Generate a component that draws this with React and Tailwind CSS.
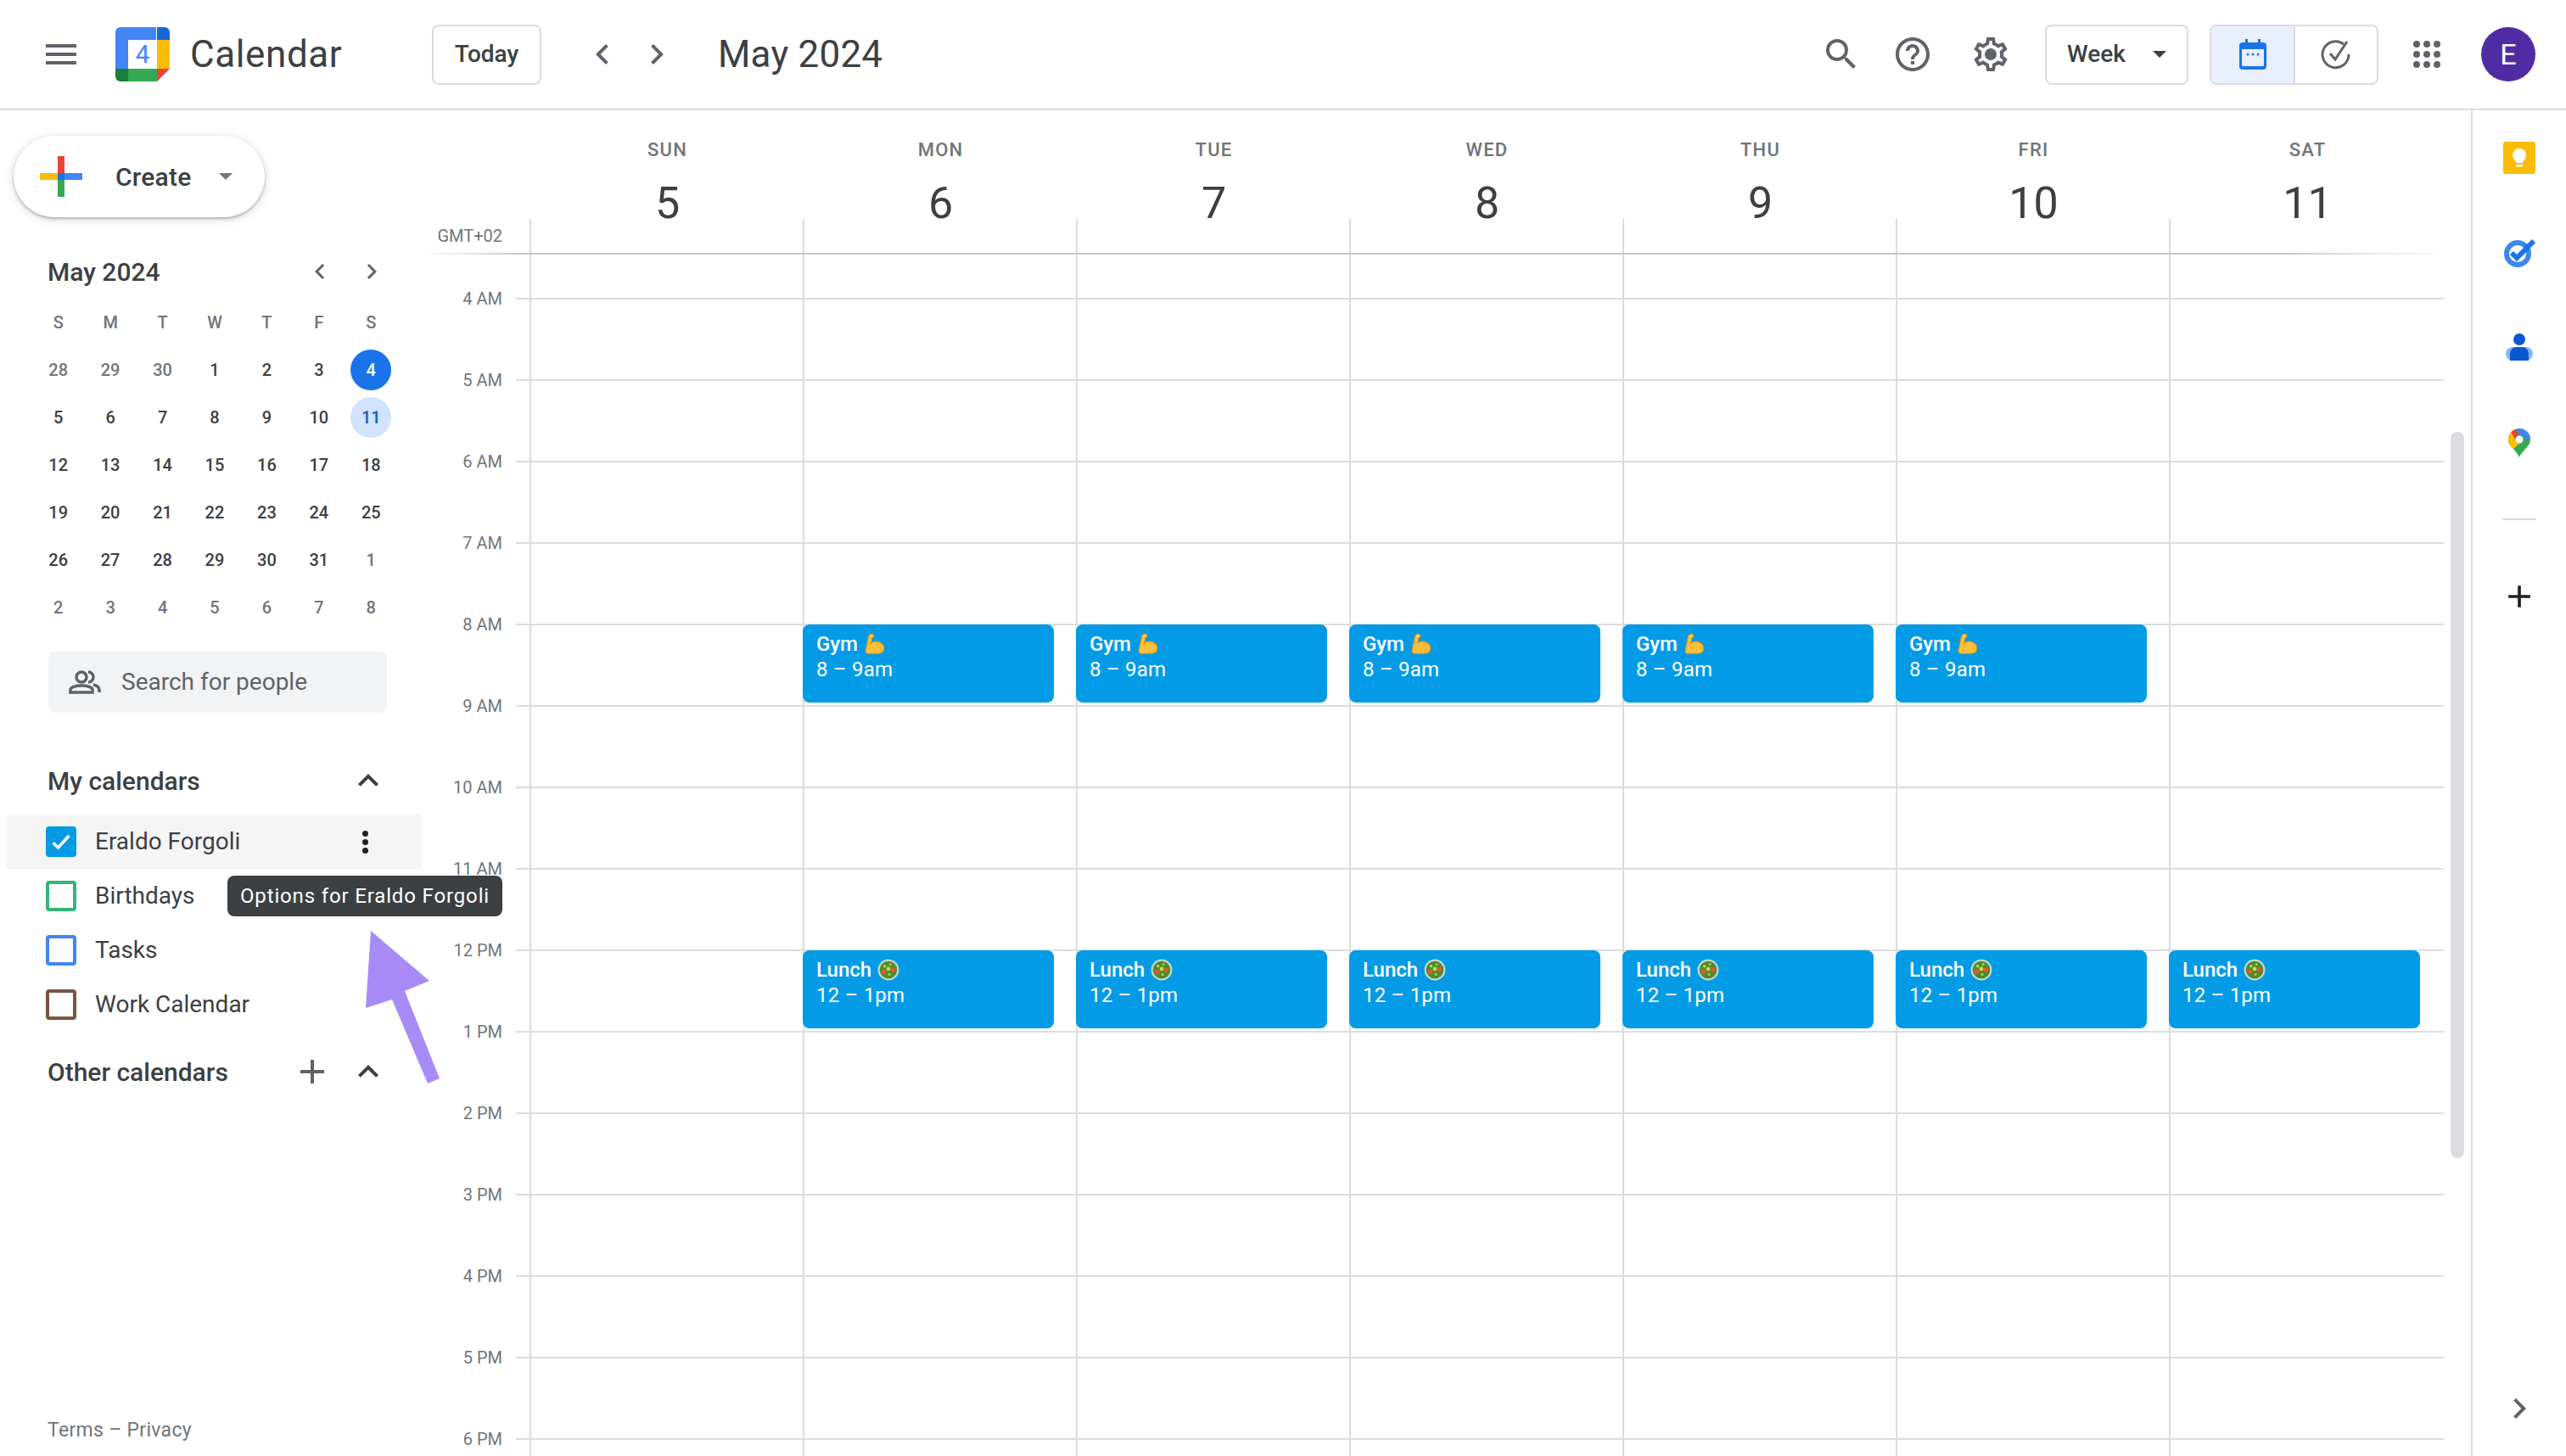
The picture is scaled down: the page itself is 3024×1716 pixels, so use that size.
import React from 'react';

const days = [
  { name: 'SUN', num: 5 },
  { name: 'MON', num: 6 },
  { name: 'TUE', num: 7 },
  { name: 'WED', num: 8 },
  { name: 'THU', num: 9 },
  { name: 'FRI', num: 10 },
  { name: 'SAT', num: 11 },
];

const hours = ['4 AM', '5 AM', '6 AM', '7 AM', '8 AM', '9 AM', '10 AM', '11 AM', '12 PM', '1 PM', '2 PM', '3 PM', '4 PM', '5 PM', '6 PM'];

const miniDays = [
  [28, 29, 30, 1, 2, 3, 4],
  [5, 6, 7, 8, 9, 10, 11],
  [12, 13, 14, 15, 16, 17, 18],
  [19, 20, 21, 22, 23, 24, 25],
  [26, 27, 28, 29, 30, 31, 1],
  [2, 3, 4, 5, 6, 7, 8],
];

const calendars = [
  { name: 'Eraldo Forgoli', color: 'border-[#039be5] bg-[#039be5]', checked: true },
  { name: 'Birthdays', color: 'border-[#33b679]' },
  { name: 'Tasks', color: 'border-[#4285f4]' },
  { name: 'Work Calendar', color: 'border-[#795548]' },
];

function Icon({ d, size = 48, className = 'fill-[#5f6368]' }) {
  return (
    <svg width={size} height={size} viewBox="0 0 24 24" className={`shrink-0 ${className}`}>
      <path d={d} />
    </svg>
  );
}

const paths = {
  menu: 'M3 18h18v-2H3v2zm0-5h18v-2H3v2zm0-7v2h18V6H3z',
  left: 'M15.41 7.41L14 6l-6 6 6 6 1.41-1.41L10.83 12z',
  right: 'M10 6L8.59 7.41 13.17 12l-4.58 4.59L10 18l6-6z',
  search: 'M15.5 14h-.79l-.28-.27A6.471 6.471 0 0 0 16 9.5 6.5 6.5 0 1 0 9.5 16c1.61 0 3.09-.59 4.23-1.57l.27.28v.79l5 4.99L20.49 19l-4.99-5zm-6 0C7.01 14 5 11.99 5 9.5S7.01 5 9.5 5 14 7.01 14 9.5 11.99 14 9.5 14z',
  help: 'M11 18h2v-2h-2v2zm1-16C6.48 2 2 6.48 2 12s4.48 10 10 10 10-4.48 10-10S17.52 2 12 2zm0 18c-4.41 0-8-3.59-8-8s3.59-8 8-8 8 3.59 8 8-3.59 8-8 8zm0-14c-2.21 0-4 1.79-4 4h2c0-1.1.9-2 2-2s2 .9 2 2c0 2-3 1.75-3 5h2c0-2.25 3-2.5 3-5 0-2.21-1.79-4-4-4z',
  settings: 'M19.43 12.98c.04-.32.07-.64.07-.98 0-.34-.03-.66-.07-.98l2.11-1.65c.19-.15.24-.42.12-.64l-2-3.46c-.09-.16-.26-.25-.44-.25-.06 0-.12.01-.17.03l-2.49 1c-.52-.4-1.08-.73-1.69-.98l-.38-2.65C14.46 2.18 14.25 2 14 2h-4c-.25 0-.46.18-.49.42l-.38 2.65c-.61.25-1.17.59-1.69.98l-2.49-1c-.06-.02-.12-.03-.18-.03-.17 0-.34.09-.43.25l-2 3.46c-.13.22-.07.49.12.64l2.11 1.65c-.04.32-.07.65-.07.98 0 .33.03.66.07.98l-2.11 1.65c-.19.15-.24.42-.12.64l2 3.46c.09.16.26.25.44.25.06 0 .12-.01.17-.03l2.49-1c.52.4 1.08.73 1.69.98l.38 2.65c.03.24.24.42.49.42h4c.25 0 .46-.18.49-.42l.38-2.65c.61-.25 1.17-.59 1.69-.98l2.49 1c.06.02.12.03.18.03.17 0 .34-.09.43-.25l2-3.46c.12-.22.07-.49-.12-.64l-2.11-1.65zm-1.98-1.71c.04.31.05.52.05.73 0 .21-.02.43-.05.73l-.14 1.13.89.7 1.08.84-.7 1.21-1.27-.51-1.04-.42-.9.68c-.43.32-.84.56-1.25.73l-1.06.43-.16 1.13-.2 1.35h-1.4l-.19-1.35-.16-1.13-1.06-.43c-.43-.18-.83-.41-1.23-.71l-.91-.7-1.06.43-1.27.51-.7-1.21 1.08-.84.89-.7-.14-1.13c-.03-.31-.05-.54-.05-.74s.02-.43.05-.73l.14-1.13-.89-.7-1.08-.84.7-1.21 1.27.51 1.04.42.9-.68c.43-.32.84-.56 1.25-.73l1.06-.43.16-1.13.2-1.35h1.39l.19 1.35.16 1.13 1.06.43c.43.18.83.41 1.23.71l.91.7 1.06-.43 1.27-.51.7 1.21-1.07.85-.89.7.14 1.13zM12 8.500a3.500 3.500 0 1 0 0 7 3.500 3.500 0 0 0 0-7z',
  up: 'M12 8l-6 6 1.41 1.41L12 10.83l4.59 4.58L18 14z',
  plus: 'M19 13h-6v6h-2v-6H5v-2h6V5h2v6h6v2z',
};

function CalendarLogo() {
  return (
    <svg width="64" height="64" viewBox="0 0 64 64" className="shrink-0">
      <path d="M6 0h42v15H15v34H0V6a6 6 0 0 1 6-6z" fill="#4285f4" />
      <path d="M49 0h9a6 6 0 0 1 6 6v9H49z" fill="#1967d2" />
      <rect x="49" y="15" width="15" height="34" fill="#fbbc04" />
      <rect x="15" y="49" width="34" height="15" fill="#34a853" />
      <path d="M0 49h15v15H6a6 6 0 0 1-6-6z" fill="#188038" />
      <path d="M49 49h15L49 64z" fill="#ea4335" />
      <rect x="15" y="15" width="34" height="34" fill="#fff" />
      <text x="32" y="42" textAnchor="middle" fontSize="30" fontFamily="Roboto, sans-serif" fill="#4285f4">4</text>
    </svg>
  );
}

function PlusLogo() {
  return (
    <svg width="50" height="48" viewBox="0 0 50 48" className="shrink-0">
      <rect x="0" y="20" width="22" height="8" fill="#fbbc04" />
      <rect x="21" y="0" width="8" height="21" fill="#ea4335" />
      <rect x="29" y="20" width="21" height="8" fill="#4285f4" />
      <rect x="21" y="20" width="8" height="8" fill="#1a73e8" />
      <rect x="21" y="28" width="8" height="20" fill="#34a853" />
    </svg>
  );
}

function Muscle() {
  return (
    <svg width="26" height="26" viewBox="0 0 24 24" className="shrink-0">
      <path d="M7 1.500c1.500-.8 3.500-.5 4 1 .4 1.200-.7 2.500-2 3L8 11c2-2 6-2.500 9-1 3 1.300 5 4 5 7 0 3.500-3 5.500-8 5.500H5c-2.500 0-3.500-1.500-3-4L5 4c.2-1.200 1-2 2-2.500z" fill="#fbbf3c" stroke="#d9921a" strokeWidth="1" />
      <circle cx="8" cy="3.500" r="1.200" fill="#fde08a" />
    </svg>
  );
}

function Salad() {
  return (
    <svg width="26" height="26" viewBox="0 0 24 24" className="shrink-0">
      <circle cx="12" cy="12" r="11.500" fill="#c9d6c2" />
      <circle cx="12" cy="12" r="9.500" fill="#4f8a2f" />
      <circle cx="7" cy="14" r="2.500" fill="#e8563a" />
      <circle cx="17" cy="12" r="2.500" fill="#e8563a" />
      <circle cx="12" cy="11" r="2.200" fill="#c6de4e" />
      <circle cx="8" cy="8" r="1.500" fill="#c6de4e" />
      <circle cx="14" cy="6" r="1.500" fill="#9ccc3c" />
      <circle cx="13" cy="17" r="1.500" fill="#9ccc3c" />
    </svg>
  );
}

function EventCard({ title, time, emoji, className }) {
  return (
    <div className={`absolute -left-[2px] z-[1] w-[296px] h-[92px] rounded-[8px] bg-[#039be5] pl-[16px] pt-[8px] text-white text-[24px] leading-[30px] ${className}`}>
      <div className="flex items-center gap-[7px] font-medium">
        <span>{title}</span>
        {emoji}
      </div>
      <div className="tracking-[0.2px]">{time}</div>
    </div>
  );
}

function Header() {
  return (
    <header className="flex items-center h-[130px] shrink-0 border-b-2 border-[#dadce0]">
      <div className="ml-[48px]"><Icon d={paths.menu} /></div>
      <div className="ml-[40px]"><CalendarLogo /></div>
      <div className="ml-[24px] w-[180px] text-[44px] tracking-[0.6px] leading-none text-[#3c4043] whitespace-nowrap">Calendar</div>
      <div className="ml-[105px] w-[129px] h-[71px] flex items-center justify-center rounded-[8px] border-2 border-[#dadce0] text-[28px] font-medium text-[#3c4043]">Today</div>
      <div className="ml-[48px] flex gap-[16px]">
        <Icon d={paths.left} />
        <Icon d={paths.right} />
      </div>
      <div className="ml-[48px] text-[44px] tracking-[0.2px] leading-none text-[#3c4043]">May 2024</div>

      <div className="ml-auto flex items-center pr-[36px]">
        <Icon d={paths.search} />
        <div className="ml-[36px]"><Icon d={paths.help} /></div>
        <div className="ml-[44px]"><Icon d={paths.settings} /></div>
        <div className="ml-[40px] w-[169px] h-[71px] flex items-center justify-between pl-[24px] pr-[24px] rounded-[8px] border-2 border-[#dadce0] text-[28px] font-medium text-[#3c4043]">
          <span>Week</span>
          <span className="w-0 h-0 border-x-[8px] border-x-transparent border-t-[8px] border-t-[#3c4043]" />
        </div>
        <div className="ml-[25px] w-[199px] h-[71px] flex rounded-[8px] border-2 border-[#dadce0] overflow-hidden">
          <div className="w-[99px] flex items-center justify-center bg-[#e8f0fe] border-r-2 border-[#dadce0]">
            <svg width="32" height="36" viewBox="0 0 32 36">
              <path d="M7 0h3v4h12V0h3v4h3a4 4 0 0 1 4 4v24a4 4 0 0 1-4 4H4a4 4 0 0 1-4-4V8a4 4 0 0 1 4-4h3z" fill="#1a73e8" />
              <rect x="3" y="12" width="26" height="20" rx="1" fill="#e8f0fe" />
              <circle cx="10" cy="18" r="1.500" fill="#1a73e8" />
              <circle cx="16" cy="18" r="1.500" fill="#1a73e8" />
              <circle cx="22" cy="18" r="1.500" fill="#1a73e8" />
            </svg>
          </div>
          <div className="flex-1 flex items-center justify-center">
            <svg width="36" height="36" viewBox="0 0 36 36" fill="none" stroke="#5f6368" strokeWidth="3">
              <path d="M27 6a15.500 15.500 0 1 0 6 12" />
              <path d="M11 17l6 7L31 3" />
            </svg>
          </div>
        </div>
        <div className="ml-[41px] w-[32px] h-[32px] grid grid-cols-3 gap-[4px]">
          {Array.from({ length: 9 }).map((_, i) => (
            <span key={i} className="w-[8px] h-[8px] rounded-full bg-[#5f6368]" />
          ))}
        </div>
        <div className="ml-[48px] w-[64px] h-[64px] rounded-full bg-[#4f2ca3] flex items-center justify-center text-white text-[34px]">E</div>
      </div>
    </header>
  );
}

function MiniCalendar() {
  return (
    <div>
      <div className="mt-[44px] h-[40px] flex items-center pl-[56px] text-[30px] font-medium text-[#3c4043]">
        <span className="w-[303px]">May 2024</span>
        <Icon d={paths.left} size={36} />
        <span className="ml-[25px]"><Icon d={paths.right} size={36} /></span>
      </div>
      <div className="mt-[12px] ml-[38px] w-[430px] grid grid-cols-7 auto-rows-[56px] text-[20px] font-medium">
        {['S', 'M', 'T', 'W', 'T', 'F', 'S'].map((d, i) => (
          <div key={i} className="flex items-center justify-center text-[#70757a]">{d}</div>
        ))}
        {miniDays.map((week, r) =>
          week.map((n, c) => {
            const outside = (r === 0 && n > 20) || (r >= 4 && n < 10);
            const today = r === 0 && c === 6;
            const selected = r === 1 && c === 6;
            let cls = 'text-[#3c4043]';
            if (outside) cls = 'text-[#70757a]';
            if (today) cls = 'bg-[#1a73e8] text-white';
            if (selected) cls = 'bg-[#d2e3fc] text-[#185abc]';
            return (
              <div key={`${r}-${c}`} className="flex items-center justify-center">
                <span className={`w-[48px] h-[48px] rounded-full flex items-center justify-center ${cls}`}>{n}</span>
              </div>
            );
          })
        )}
      </div>
    </div>
  );
}

function Sidebar() {
  return (
    <aside className="relative z-10 w-[497px] shrink-0 flex flex-col">
      <div className="mt-[30px] ml-[16px] w-[296px] h-[96px] shrink-0 rounded-[48px] bg-white flex items-center pl-[31px] shadow-[0_2px_3px_rgba(60,64,67,0.3),0_2px_8px_2px_rgba(60,64,67,0.15)]">
        <PlusLogo />
        <span className="ml-[39px] text-[30px] tracking-[0.2px] font-medium text-[#3c4043]">Create</span>
        <span className="ml-[33px] w-0 h-0 border-x-[8px] border-x-transparent border-t-[8px] border-t-[#70757a]" />
      </div>

      <MiniCalendar />

      <div className="mt-[24px] ml-[57px] w-[399px] h-[72px] shrink-0 rounded-[8px] bg-[#f1f3f4] flex items-center pl-[24px] text-[28px] text-[#5f6368]">
        <svg width="38" height="28" viewBox="0 0 38 28" fill="none" stroke="#5f6368" strokeWidth="3.500">
          <circle cx="15" cy="8" r="6" />
          <path d="M2 26v-3c0-3 6-5 13-5s13 2 13 5v3z" />
          <path d="M23 2a6 6 0 0 1 0 12" />
          <path d="M29 17c4 1 7 3 7 6v3" />
        </svg>
        <span className="ml-[24px]">Search for people</span>
      </div>

      <div className="mt-[52px] h-[56px] shrink-0 flex items-center pl-[56px] text-[30px] font-medium text-[#3c4043]">
        <span className="w-[354px]">My calendars</span>
        <Icon d={paths.up} className="fill-[#3c4043]" />
      </div>

      <div className="mt-[12px]">
        {calendars.map((cal, i) => (
          <div key={cal.name} className={`ml-[8px] h-[64px] flex items-center pl-[46px] ${i === 0 ? 'bg-[#f5f5f5]' : ''}`}>
            <span className={`w-[36px] h-[36px] rounded-[4px] border-[4px] flex items-center justify-center ${cal.color}`}>
              {cal.checked && (
                <svg width="28" height="28" viewBox="0 0 24 24" fill="none" stroke="#fff" strokeWidth="3">
                  <path d="M4 13l5 5L20 6" />
                </svg>
              )}
            </span>
            <span className="ml-[22px] w-[315px] text-[28px] text-[#3c4043]">{cal.name}</span>
            {cal.checked && (
              <span className="flex flex-col gap-[3px]">
                <span className="w-[7px] h-[7px] rounded-full bg-[#202124]" />
                <span className="w-[7px] h-[7px] rounded-full bg-[#202124]" />
                <span className="w-[7px] h-[7px] rounded-full bg-[#202124]" />
              </span>
            )}
          </div>
        ))}
      </div>

      <div className="mt-[19px] h-[56px] shrink-0 flex items-center pl-[56px] text-[30px] font-medium text-[#3c4043]">
        <span className="w-[288px]">Other calendars</span>
        <Icon d={paths.plus} size={48} />
        <span className="ml-[18px]"><Icon d={paths.up} className="fill-[#3c4043]" /></span>
      </div>

      <div className="mt-auto pb-[15px] pl-[56px] text-[23px] tracking-[0.3px] leading-[30px] text-[#70757a]">Terms – Privacy</div>

      <div className="absolute left-[268px] top-[902px] w-[324px] h-[48px] rounded-[8px] bg-[#3c4043] flex items-center justify-center text-[24px] tracking-[0.85px] text-white whitespace-nowrap">
        Options for Eraldo Forgoli
      </div>
      <svg className="absolute left-[431px] top-[967px]" width="90" height="182" viewBox="0 0 90 182">
        <path d="M6 0L75 59L46 71L87 174L73 180L31 81L0 91z" fill="#a98bf8" />
      </svg>
    </aside>
  );
}

function WeekGrid() {
  return (
    <main className="relative flex-1 flex flex-col overflow-hidden">
      <div className="flex h-[168px] shrink-0">
        <div className="w-[127px] flex items-end justify-end pr-[32px] pb-[6px] text-[20px] leading-[28px] text-[#70757a]">GMT+02</div>
        <div className="grid grid-cols-[repeat(6,322px)_324px]">
          {days.map((d) => (
            <div key={d.name} className="relative flex flex-col items-center pt-[33px] pl-[3px]">
              <span className="text-[22px] leading-[28px] font-medium tracking-[1.2px] text-[#70757a]">{d.name}</span>
              <span className="mt-[19px] text-[52px] leading-[60px] text-[#3c4043]">{d.num}</span>
              <span className="absolute left-0 bottom-0 w-[2px] h-[40px] bg-[#dadce0]" />
            </div>
          ))}
        </div>
      </div>
      <div className="h-[2px] w-[2383px] shrink-0 bg-[linear-gradient(90deg,transparent_0,#c4c7ca_5%,#c4c7ca_92%,transparent_100%)]" />

      <div className="flex flex-1">
        <div className="w-[127px] shrink-0 pt-[4px]">
          {hours.map((h) => (
            <div key={h} className="h-[96px] flex items-center justify-end gap-[16px] text-[20px] text-[#70757a]">
              <span>{h}</span>
              <span className="w-[16px] h-[2px] bg-[#dadce0]" />
            </div>
          ))}
        </div>
        <div className="grid grid-cols-[repeat(6,322px)_324px]">
          {days.map((d, i) => (
            <div key={d.name} className="relative border-l-2 border-[#dadce0]">
              <div className="h-[53px] border-b-2 border-[#dadce0]" />
              {hours.map((h) => (
                <div key={h} className="h-[96px] border-b-2 border-[#dadce0]" />
              ))}
              {i > 0 && i < 6 && (
                <EventCard title="Gym" time="8 – 9am" emoji={<Muscle />} className="top-[436px]" />
              )}
              {i > 0 && (
                <EventCard title="Lunch" time="12 – 1pm" emoji={<Salad />} className="top-[820px]" />
              )}
            </div>
          ))}
        </div>
      </div>

      <div className="absolute left-[2391px] top-[379px] w-[16px] h-[856px] rounded-full bg-[#dadce0]" />
    </main>
  );
}

function SidePanel() {
  return (
    <aside className="w-[112px] shrink-0 border-l-2 border-[#dadce0] flex flex-col items-center">
      <svg className="mt-[37px]" width="38" height="38" viewBox="0 0 38 38">
        <rect width="38" height="38" rx="3" fill="#fbbc04" />
        <circle cx="19" cy="16" r="8" fill="#fff" />
        <rect x="15" y="22" width="8" height="3" fill="#fff" />
        <rect x="15" y="27" width="8" height="2.500" fill="#fff" />
      </svg>
      <svg className="mt-[76px]" width="38" height="34" viewBox="0 0 38 34" fill="none">
        <circle cx="17" cy="18" r="13" stroke="#1a73e8" strokeOpacity="0.85" strokeWidth="6" />
        <path d="M10 17l6 6L36 3" stroke="#1a73e8" strokeWidth="6" />
      </svg>
      <svg className="mt-[78px]" width="32" height="32" viewBox="0 0 32 32">
        <circle cx="16" cy="7" r="7" fill="#0b57d0" />
        <rect x="0" y="16" width="32" height="16" rx="8" fill="#8ab4f8" />
        <path d="M5 24a8 8 0 0 1 8-8h6a8 8 0 0 1 8 8v8H5z" fill="#0b57d0" />
      </svg>
      <svg className="mt-[80px]" width="26" height="34" viewBox="0 0 26 34">
        <path d="M13 0a13 13 0 0 1 13 13c0 8-9 12-13 21C9 25 0 21 0 13A13 13 0 0 1 13 0z" fill="#34a853" />
        <path d="M3.500 4L9 13c0 3 2 4 4 5l-7 6C3 21 0 18 0 13c0-4 1.500-7 3.500-9z" fill="#fbbc04" />
        <path d="M3.500 4A13 13 0 0 1 9 1l4 6c-2 0-4 2-4 4l-1 2z" fill="#ea4335" />
        <path d="M9 1a13 13 0 0 1 17 10l-7 3c1-4-2-7-6-7z" fill="#4285f4" />
        <circle cx="13" cy="13" r="4.500" fill="#fff" />
      </svg>
      <div className="mt-[72px] w-[40px] h-[2px] bg-[#dadce0]" />
      <div className="mt-[68px]"><Icon d={paths.plus} size={44} className="fill-[#202124]" /></div>
      <div className="mt-auto mb-[32px]"><Icon d={paths.right} size={48} className="fill-[#5f6368]" /></div>
    </aside>
  );
}

export default function App() {
  return (
    <div className="w-[3024px] h-[1716px] overflow-hidden flex flex-col bg-white font-[Roboto,sans-serif]">
      <Header />
      <div className="flex flex-1 min-h-0">
        <Sidebar />
        <WeekGrid />
        <SidePanel />
      </div>
    </div>
  );
}
